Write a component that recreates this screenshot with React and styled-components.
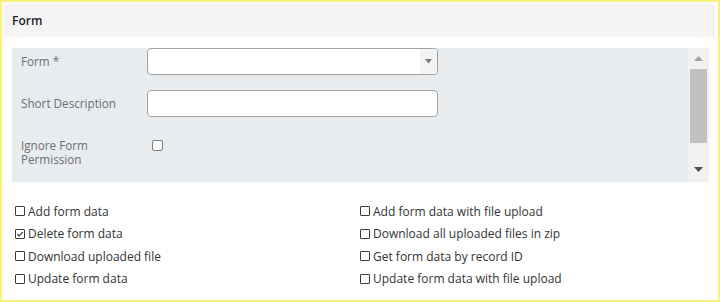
import React from "react"
import styled, { createGlobalStyle } from "styled-components"

const GlobalStyle = createGlobalStyle`
  body {
    margin: 0;
    font-family: "Open Sans", "DejaVu Sans", sans-serif;
    background: #fff;
  }
`

const permissions = [
  { label: "Add form data", checked: false },
  { label: "Add form data with file upload", checked: false },
  { label: "Delete form data", checked: true },
  { label: "Download all uploaded files in zip", checked: false },
  { label: "Download uploaded file", checked: false },
  { label: "Get form data by record ID", checked: false },
  { label: "Update form data", checked: false },
  { label: "Update form data with file upload", checked: false },
]

const Box = ({ checked }) => (
  <CheckBox>
    {checked && (
      <svg width="8" height="8" viewBox="0 0 8 8">
        <path d="M1.3 4.2 L3.2 6 L6.8 1.8" fill="none" stroke="#333" strokeWidth="1.2" />
      </svg>
    )}
  </CheckBox>
)

export default () => {
  return (
    <>
      <GlobalStyle />
      <Card>
        <Header>Form</Header>
        <Body>
          <Panel>
            <Fields>
              <FieldRow>
                <Label>Form *</Label>
                <Select>
                  <SelectArrow>
                    <svg width="7" height="5" viewBox="0 0 7 5">
                      <path d="M0 0 H7 L3.5 4.5 Z" fill="#7a7a7a" />
                    </svg>
                  </SelectArrow>
                </Select>
              </FieldRow>
              <FieldRow>
                <Label>Short Description</Label>
                <Input />
              </FieldRow>
              <FieldRow top>
                <Label>Ignore Form Permission</Label>
                <SmallCheck />
              </FieldRow>
            </Fields>
            <Scrollbar>
              <Arrow size={21}>
                <svg width="9" height="5" viewBox="0 0 9 5">
                  <path d="M0 5 H9 L4.5 0 Z" fill="#a3a3a3" />
                </svg>
              </Arrow>
              <Track>
                <Thumb />
              </Track>
              <Arrow size={26}>
                <svg width="9" height="5" viewBox="0 0 9 5">
                  <path d="M0 0 H9 L4.5 5 Z" fill="#505050" />
                </svg>
              </Arrow>
            </Scrollbar>
          </Panel>
          <PermissionList>
            {permissions.map((p) => (
              <Permission key={p.label}>
                <Box checked={p.checked} />
                {p.label}
              </Permission>
            ))}
          </PermissionList>
        </Body>
      </Card>
    </>
  )
}

const Card = styled.div`
  width: 720px;
  height: 302px;
  box-sizing: border-box;
  border: 2px solid #f6f27a;
  padding: 1px 4px 0 1px;
`

const Header = styled.div`
  height: 34px;
  display: flex;
  align-items: center;
  padding-left: 9px;
  background: #f5f5f5;
  border-right: 1px solid #ececec;
  font-size: 12px;
  font-weight: 600;
  color: #1e1e1e;
`

const Body = styled.div`
  padding: 11px 0 0 9px;
`

const Panel = styled.div`
  display: flex;
  width: 697px;
  height: 134px;
`

const Fields = styled.div`
  flex: 1;
  background: #e9ecef;
  padding-left: 9px;
`

const FieldRow = styled.div`
  display: flex;
  align-items: ${(p) => (p.top ? "flex-start" : "center")};
  margin-bottom: ${(p) => (p.top ? "0" : "15px")};
  margin-top: ${(p) => (p.top ? "22px" : "0")};
`

const Label = styled.div`
  width: 126px;
  padding-right: 12px;
  box-sizing: border-box;
  font-size: 11.7px;
  line-height: 13.5px;
  color: #6b6f73;
`

const Input = styled.div`
  width: 291px;
  height: 27px;
  box-sizing: border-box;
  background: #fff;
  border: 1px solid #a2a2a2;
  border-radius: 4px;
`

const Select = styled(Input)`
  display: flex;
  justify-content: flex-end;
  overflow: hidden;
`

const SelectArrow = styled.div`
  width: 17px;
  background: #f3f3f3;
  display: flex;
  align-items: center;
  justify-content: center;
`

const SmallCheck = styled.span`
  width: 11px;
  height: 11px;
  box-sizing: border-box;
  margin: 1px 0 0 5px;
  border: 1px solid #7d7d7d;
  border-radius: 2px;
  background: #fff;
`

const Scrollbar = styled.div`
  width: 21px;
  background: #f1f1f1;
  display: flex;
  flex-direction: column;
`

const Arrow = styled.div`
  height: ${(p) => p.size}px;
  display: flex;
  align-items: center;
  justify-content: center;
`

const Track = styled.div`
  flex: 1;
  padding: 0 2px;
`

const Thumb = styled.div`
  height: 74px;
  background: #c1c1c1;
`

const PermissionList = styled.div`
  display: grid;
  grid-template-columns: 345px 345px;
  grid-auto-rows: 22.5px;
  margin: 18px 0 0 3px;
`

const Permission = styled.label`
  display: flex;
  align-items: center;
  gap: 3px;
  font-size: 12px;
  color: #333;
`

const CheckBox = styled.span`
  width: 10px;
  height: 10px;
  box-sizing: border-box;
  border: 1px solid #3a3a3a;
  border-radius: 1px;
  display: inline-flex;
  align-items: center;
  justify-content: center;
`
